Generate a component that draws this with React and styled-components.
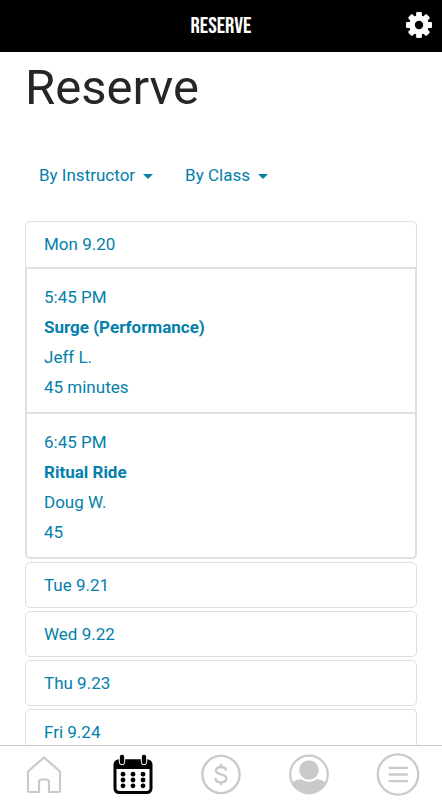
import React, { useState } from 'react';
import styled, { createGlobalStyle } from 'styled-components';

const GlobalStyle = createGlobalStyle`
  * {
    box-sizing: border-box;
  }

  body {
    margin: 0;
    background: #fff;
    font-family: Roboto, 'Liberation Sans', sans-serif;
    font-size: 17px;
  }

  button {
    font: inherit;
    background: none;
    border: none;
    padding: 0;
    cursor: pointer;
  }
`;

const Screen = styled.div`
  display: flex;
  flex-direction: column;
  height: 100vh;
`;

const Header = styled.header`
  display: grid;
  grid-template-columns: 1fr auto 1fr;
  align-items: center;
  flex-shrink: 0;
  height: 52px;
  padding: 0 9px;
  background: #000;
  color: #fff;
`;

const HeaderTitle = styled.div`
  grid-column: 2;
  font-family: 'Bebas Neue', 'Roboto Condensed', 'Liberation Sans Narrow', Roboto, sans-serif;
  font-size: 23px;
  font-weight: 400;
`;

const SettingsButton = styled.button`
  justify-self: end;
  display: flex;
  color: #fff;
`;

const Content = styled.main`
  flex: 1;
  min-height: 0;
  overflow-y: auto;
  scrollbar-width: none;
  padding: 6px 25px 0;
`;

const PageTitle = styled.h1`
  margin: 0;
  color: #262626;
  font-size: 49px;
  font-weight: 400;
  line-height: 60px;
`;

const Filters = styled.div`
  display: flex;
  gap: 32px;
  margin: 42px 14px 31px;
`;

const FilterButton = styled.button`
  display: flex;
  align-items: center;
  gap: 8px;
  color: #0480ab;
  line-height: 30px;

  &::after {
    content: '';
    margin-top: 3px;
    border-top: 5px solid;
    border-left: 5px solid transparent;
    border-right: 5px solid transparent;
  }
`;

const Schedule = styled.div`
  display: flex;
  flex-direction: column;
  gap: 3px;
`;

const DayButton = styled.button`
  display: block;
  width: 100%;
  height: 46px;
  padding: 0 18px 1px;
  border: 1px solid #dedede;
  border-radius: ${props => (props.$open ? '5px 5px 0 0' : '5px')};
  border-bottom-width: ${props => (props.$open ? '0' : '1px')};
  color: #0480ab;
  text-align: left;
`;

const ClassList = styled.ul`
  margin: 0;
  padding: 0;
  list-style: none;
  border: 2px solid #e0e0e0;
  border-radius: 0 0 5px 5px;
`;

const ClassItem = styled.li`
  & + & {
    border-top: 2px solid #e0e0e0;
  }
`;

const ClassLink = styled.a`
  display: flex;
  flex-direction: column;
  padding: 13px 17px 10px;
  color: #0480ab;
  line-height: 30px;
  text-decoration: none;
`;

const TabBar = styled.nav`
  display: grid;
  grid-template-columns: repeat(5, 1fr);
  flex-shrink: 0;
  height: 55px;
  border-top: 1px solid #cacaca;
  background: #fff;
`;

const Tab = styled.button`
  display: flex;
  align-items: center;
  justify-content: center;
  padding-top: 4px;
  color: ${props => (props.$active ? '#000' : '#cacaca')};
`;

const GearIcon = () => (
  <svg width="28" height="28" viewBox="-14 -13 28 28" fill="currentColor" aria-hidden="true">
    {[0, 45, 90, 135].map(angle => (
      <rect
        key={angle}
        x="-2.9"
        y="-13"
        width="5.8"
        height="26"
        rx="1.2"
        transform={`rotate(${angle})`}
      />
    ))}
    <circle r="9.8" />
    <circle r="4.2" fill="#000" />
  </svg>
);

const HomeIcon = () => (
  <svg width="44" height="44" viewBox="0 0 44 44" fill="none" stroke="currentColor" strokeWidth="2.2" strokeLinejoin="round" aria-hidden="true">
    <path d="M22 4.5 L38 18.5 V37.5 Q38 39 36.5 39 H27 V29 Q27 26.5 24.5 26.5 H19.5 Q17 26.5 17 29 V39 H7.5 Q6 39 6 37.5 V18.5 Z" />
  </svg>
);

const CalendarIcon = () => (
  <svg width="44" height="44" viewBox="0 0 44 44" fill="currentColor" aria-hidden="true">
    <rect x="2.5" y="6.2" width="39" height="34.8" rx="5.5" />
    <path d="M5.5 16 H38.5 V35 Q38.5 38 35.5 38 H8.5 Q5.5 38 5.5 35 Z" fill="#fff" />
    {[11, 33].map(x => (
      <rect key={x} x={x - 2.7} y="1.2" width="5.4" height="10.6" rx="2.7" stroke="#fff" strokeWidth="1" />
    ))}
    {[21.2, 27, 32.8].map(y =>
      [12, 22, 32].map(x => <circle key={`${x}-${y}`} cx={x} cy={y} r="2.4" />)
    )}
  </svg>
);

const DollarIcon = () => (
  <svg width="44" height="44" viewBox="0 0 44 44" fill="none" stroke="currentColor" strokeWidth="2.4" aria-hidden="true">
    <circle cx="22" cy="21.5" r="18.6" />
    <path
      d="M27 16.8 C26.5 14.8 24.8 14 22 14 C18.5 14 17 15.5 17 17.6 C17 20 19 20.7 22 21.4 C25.5 22.2 27.3 23.3 27.3 25.6 C27.3 28 25.2 29.4 22 29.4 C18.9 29.4 17 28.2 16.6 26 M22 11.8 V14 M22 29.4 V31.2"
      strokeLinecap="round"
    />
  </svg>
);

const ProfileIcon = () => (
  <svg width="44" height="44" viewBox="0 0 44 44" aria-hidden="true">
    <circle cx="22" cy="21.5" r="18.8" fill="none" stroke="currentColor" strokeWidth="2.2" />
    <circle cx="22" cy="17" r="9.8" fill="currentColor" />
    <path
      d="M5 29.5 Q9.5 26 14.5 26.2 Q22 32 29.5 26.2 Q34.5 26 39 29.5 A19 19 0 0 1 5 29.5 Z"
      fill="currentColor"
    />
  </svg>
);

const MenuIcon = () => (
  <svg width="44" height="44" viewBox="0 0 44 44" fill="none" stroke="currentColor" strokeWidth="2.3" aria-hidden="true">
    <circle cx="22" cy="21.5" r="20.2" />
    <path d="M13.5 14.8 H31 M13.5 21.5 H31 M13.5 28.2 H31" strokeLinecap="round" />
  </svg>
);

const days = [
  {
    label: 'Mon 9.20',
    classes: [
      { time: '5:45 PM', name: 'Surge (Performance)', instructor: 'Jeff L.', duration: '45 minutes' },
      { time: '6:45 PM', name: 'Ritual Ride', instructor: 'Doug W.', duration: '45' },
    ],
  },
  { label: 'Tue 9.21', classes: [] },
  { label: 'Wed 9.22', classes: [] },
  { label: 'Thu 9.23', classes: [] },
  { label: 'Fri 9.24', classes: [] },
];

const tabs = [
  { id: 'Home', Icon: HomeIcon },
  { id: 'Reserve', Icon: CalendarIcon },
  { id: 'Buy', Icon: DollarIcon },
  { id: 'Profile', Icon: ProfileIcon },
  { id: 'More', Icon: MenuIcon },
];

const App = () => {
  const [openDay, setOpenDay] = useState('Mon 9.20');
  const [activeTab, setActiveTab] = useState('Reserve');

  return (
    <Screen>
      <GlobalStyle />
      <Header>
        <HeaderTitle>RESERVE</HeaderTitle>
        <SettingsButton aria-label="Settings">
          <GearIcon />
        </SettingsButton>
      </Header>

      <Content>
        <PageTitle>Reserve</PageTitle>
        <Filters>
          <FilterButton>By Instructor</FilterButton>
          <FilterButton>By Class</FilterButton>
        </Filters>

        <Schedule>
          {days.map(({ label, classes }) => {
            const open = label === openDay && classes.length > 0;
            return (
              <section key={label}>
                <DayButton
                  $open={open}
                  aria-expanded={open}
                  onClick={() => setOpenDay(open ? '' : label)}
                >
                  {label}
                </DayButton>
                {open && (
                  <ClassList>
                    {classes.map(item => (
                      <ClassItem key={item.time}>
                        <ClassLink href="#">
                          <span>{item.time}</span>
                          <strong>{item.name}</strong>
                          <span>{item.instructor}</span>
                          <span>{item.duration}</span>
                        </ClassLink>
                      </ClassItem>
                    ))}
                  </ClassList>
                )}
              </section>
            );
          })}
        </Schedule>
      </Content>

      <TabBar>
        {tabs.map(({ id, Icon }) => (
          <Tab
            key={id}
            aria-label={id}
            $active={activeTab === id}
            onClick={() => setActiveTab(id)}
          >
            <Icon />
          </Tab>
        ))}
      </TabBar>
    </Screen>
  );
};

export default App;
